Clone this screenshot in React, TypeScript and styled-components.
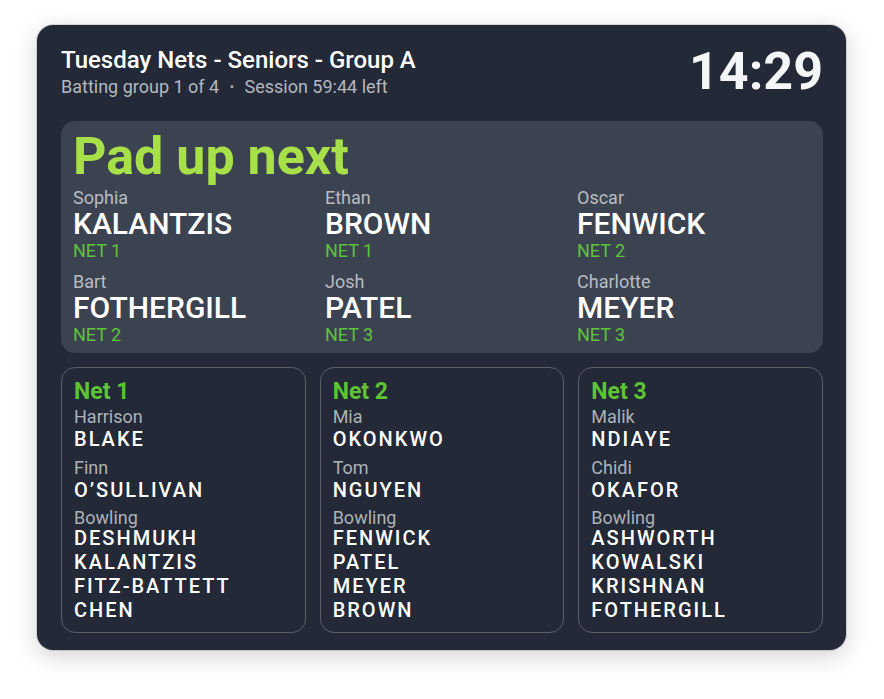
import React from "react";
import styled, { createGlobalStyle } from "styled-components";

const GlobalStyle = createGlobalStyle`
  html, body {
    margin: 0;
    padding: 0;
    background: #ffffff;
    font-family: Roboto, "Liberation Sans", sans-serif;
  }
`;

const padUp = [
  { first: "Sophia", last: "KALANTZIS", net: "NET 1" },
  { first: "Ethan", last: "BROWN", net: "NET 1" },
  { first: "Oscar", last: "FENWICK", net: "NET 2" },
  { first: "Bart", last: "FOTHERGILL", net: "NET 2" },
  { first: "Josh", last: "PATEL", net: "NET 3" },
  { first: "Charlotte", last: "MEYER", net: "NET 3" },
];

const nets = [
  {
    name: "Net 1",
    batters: [
      { first: "Harrison", last: "BLAKE" },
      { first: "Finn", last: "O’SULLIVAN" },
    ],
    bowling: ["DESHMUKH", "KALANTZIS", "FITZ-BATTETT", "CHEN"],
  },
  {
    name: "Net 2",
    batters: [
      { first: "Mia", last: "OKONKWO" },
      { first: "Tom", last: "NGUYEN" },
    ],
    bowling: ["FENWICK", "PATEL", "MEYER", "BROWN"],
  },
  {
    name: "Net 3",
    batters: [
      { first: "Malik", last: "NDIAYE" },
      { first: "Chidi", last: "OKAFOR" },
    ],
    bowling: ["ASHWORTH", "KOWALSKI", "KRISHNAN", "FOTHERGILL"],
  },
];

const App = () => {
  return (
    <Page>
      <GlobalStyle />
      <Board>
        <Header>
          <div>
            <Title>Tuesday Nets - Seniors - Group A</Title>
            <Sub>
              Batting group 1 of 4 <Dot>•</Dot> Session 59:44 left
            </Sub>
          </div>
          <Clock>14:29</Clock>
        </Header>

        <PadBox>
          <PadTitle>Pad up next</PadTitle>
          <PadGrid>
            {padUp.map((p) => (
              <PadItem key={p.last}>
                <First>{p.first}</First>
                <BigLast>{p.last}</BigLast>
                <NetTag>{p.net}</NetTag>
              </PadItem>
            ))}
          </PadGrid>
        </PadBox>

        <NetRow>
          {nets.map((n) => (
            <NetCard key={n.name}>
              <NetName>{n.name}</NetName>
              {n.batters.map((b) => (
                <Batter key={b.last}>
                  <SmallFirst>{b.first}</SmallFirst>
                  <Last>{b.last}</Last>
                </Batter>
              ))}
              <BowlLabel>Bowling</BowlLabel>
              {n.bowling.map((b) => (
                <Last key={b}>{b}</Last>
              ))}
            </NetCard>
          ))}
        </NetRow>
      </Board>
    </Page>
  );
};

export default App;

const Page = styled.div`
  padding: 25px 38px 50px 37px;
`;

const Board = styled.div`
  width: 809px;
  box-sizing: border-box;
  background: #232936;
  border-radius: 16px;
  padding: 19px 23px 17px 24px;
  box-shadow: 0 0 0 1px rgba(0, 0, 0, 0.12), 0 6px 24px rgba(0, 0, 0, 0.18);
  color: #ffffff;
`;

const Header = styled.div`
  display: flex;
  justify-content: space-between;
  align-items: center;
  margin-bottom: 21px;
`;

const Title = styled.div`
  font-size: 24px;
  font-weight: 500;
  line-height: 30px;
  color: #ffffff;
`;

const Sub = styled.div`
  font-size: 18px;
  line-height: 24px;
  color: #b3b8c0;
`;

const Dot = styled.span`
  margin: 0 6px;
  font-size: 13px;
  vertical-align: 2px;
`;

const Clock = styled.div`
  font-size: 52px;
  font-weight: 700;
  line-height: 56px;
  color: #f4f5f6;
`;

const PadBox = styled.div`
  background: #3c4350;
  border-radius: 14px;
  padding: 8px 12px 7px;
  margin-bottom: 14px;
`;

const PadTitle = styled.div`
  font-size: 52px;
  font-weight: 700;
  line-height: 56px;
  color: #a8e04a;
  margin-bottom: 3px;
`;

const PadGrid = styled.div`
  display: grid;
  grid-template-columns: repeat(3, 1fr);
  column-gap: 18px;
  row-gap: 10px;
`;

const PadItem = styled.div`
  display: flex;
  flex-direction: column;
`;

const First = styled.div`
  font-size: 18px;
  line-height: 20px;
  color: #b8bcc3;
`;

const BigLast = styled.div`
  font-size: 30px;
  font-weight: 500;
  line-height: 32px;
  color: #ffffff;
`;

const NetTag = styled.div`
  font-size: 18px;
  line-height: 22px;
  color: #5cc33a;
`;

const NetRow = styled.div`
  display: grid;
  grid-template-columns: repeat(3, 1fr);
  gap: 14px;
`;

const NetCard = styled.div`
  border: 1px solid #5b6067;
  border-radius: 14px;
  padding: 10px 12px 10px;
  display: flex;
  flex-direction: column;
`;

const NetName = styled.div`
  font-size: 23px;
  font-weight: 700;
  line-height: 28px;
  color: #5cc435;
`;

const Batter = styled.div`
  display: flex;
  flex-direction: column;
  margin-bottom: 6px;
`;

const SmallFirst = styled.div`
  font-size: 18px;
  line-height: 21px;
  color: #adb2b9;
`;

const BowlLabel = styled(SmallFirst)`
  line-height: 16px;
  margin-top: 2px;
`;

const Last = styled.div`
  font-size: 20px;
  font-weight: 500;
  line-height: 24px;
  letter-spacing: 2px;
  color: #ffffff;
`;
